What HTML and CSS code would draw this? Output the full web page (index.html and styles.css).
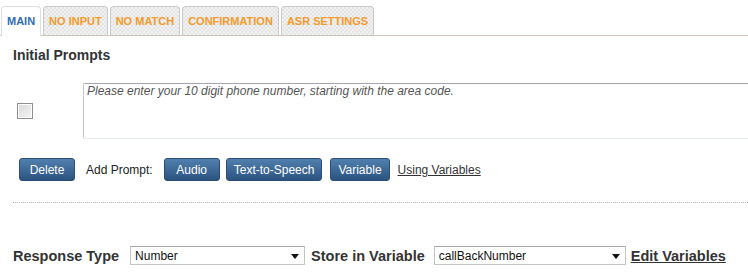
FILE: index.html
```html
<!DOCTYPE html>
<html lang="en">

<head>
    <meta charset="UTF-8">
    <meta name="viewport" content="width=device-width, initial-scale=1.0">
    <title>Prompt Settings</title>
    <link rel="stylesheet" href="styles.css">
</head>

<body>
    <div class="tabs">
        <div class="tab active">MAIN</div>
        <div class="tab">NO INPUT</div>
        <div class="tab">NO MATCH</div>
        <div class="tab">CONFIRMATION</div>
        <div class="tab">ASR SETTINGS</div>
    </div>

    <div class="content">
        <h2>Initial Prompts</h2>

        <div class="prompt-row">
            <div class="check-cell">
                <input type="checkbox" name="prompt1" id="prompt1">
            </div>
            <textarea class="prompt-text" name="prompt1-text" id="prompt1-text" placeholder="Please enter your 10 digit phone number, starting with the area code."></textarea>
        </div>

        <div class="actions">
            <button type="button" class="btn btn-delete">Delete</button>
            <span class="add-label">Add Prompt:</span>
            <button type="button" class="btn btn-audio">Audio</button>
            <button type="button" class="btn btn-tts">Text-to-Speech</button>
            <button type="button" class="btn btn-variable">Variable</button>
            <a href="#" class="link">Using Variables</a>
        </div>

        <hr class="dotted">

        <div class="response-row">
            <label for="response-type">Response Type</label>
            <div class="select-wrap select-type">
                <select name="response-type" id="response-type">
                    <option>Number</option>
                </select>
            </div>
            <label for="store-var" class="store-label">Store in Variable</label>
            <div class="select-wrap select-var">
                <select name="store-var" id="store-var">
                    <option>callBackNumber</option>
                </select>
            </div>
            <a href="#" class="link edit-link">Edit Variables</a>
        </div>
    </div>
</body>

</html>
```

FILE: styles.css
```css
body {
    font-family: "Liberation Sans", Arial, sans-serif;
    margin: 0;
    padding: 0;
    background-color: #fff;
    color: #333;
    overflow: hidden;
}

.tabs {
    display: flex;
    gap: 2px;
    padding-top: 5px;
    padding-left: 1px;
    border-bottom: 1px solid #cdc6b5;
}

.tab {
    height: 28px;
    line-height: 29px;
    padding: 0 5px;
    font-size: 11px;
    font-weight: bold;
    color: #f39b2c;
    border: 1px solid #c9c9c9;
    border-bottom: none;
    border-radius: 4px 4px 0 0;
    background-color: #ececec;
    background-image: repeating-conic-gradient(#e4e4e4 0 25%, #f1f1f1 0 50%);
    background-size: 4px 4px;
    margin-top: 1px;
}

.tab.active {
    color: #2f6db5;
    background: #fff;
    border-color: #dedede;
    margin-bottom: -1px;
    height: 29px;
}

.content {
    padding-left: 13px;
}

h2 {
    font-size: 14px;
    line-height: 16px;
    margin: 11px 0 20px 0;
    color: #333;
}

.prompt-row {
    display: flex;
    align-items: center;
}

.check-cell {
    width: 70px;
    flex-shrink: 0;
}

.check-cell input[type="checkbox"] {
    appearance: none;
    -webkit-appearance: none;
    width: 16px;
    height: 16px;
    margin: 0 0 0 4px;
    display: block;
    border: 1px solid #8f8f8f;
    box-shadow: inset 0 0 0 1px #fff;
    background: linear-gradient(135deg, #d8d8d8, #f6f6f6);
}

.prompt-text {
    flex: 1;
    height: 56px;
    margin-right: -20px;
    padding: 0 3px;
    box-sizing: border-box;
    border: 1px solid #d4d8dc;
    border-top-color: #a6a6ae;
    border-left-color: #c6c6cc;
    border-bottom-color: #e2e8ec;
    border-radius: 2px;
    font-family: "Liberation Sans", Arial, sans-serif;
    font-size: 12px;
    resize: none;
}

.prompt-text::placeholder {
    color: #555;
    font-style: italic;
    opacity: 1;
}

.actions {
    display: flex;
    align-items: center;
    margin-top: 19px;
    padding-left: 6px;
    font-size: 12px;
}

.btn {
    min-width: 56px;
    height: 23px;
    padding: 0 8px;
    font-family: "Liberation Sans", Arial, sans-serif;
    font-size: 12px;
    color: #fff;
    border: 1px solid #2a4e78;
    border-radius: 3px;
    background: linear-gradient(#5180ae, #2b5380);
    cursor: pointer;
}

.add-label {
    margin: 0 11px;
    color: #222;
}

.btn-tts {
    margin-left: 6px;
    padding: 0 7px;
}

.btn-variable {
    margin-left: 8px;
    padding: 0 7px;
}

.link {
    color: #333;
    text-decoration: underline;
    margin-left: 8px;
}

.dotted {
    border: none;
    border-top: 1px dotted #b0b0b0;
    margin: 21px 0 0 0;
    height: 0;
}

.response-row {
    display: flex;
    align-items: center;
    margin-top: 43px;
    font-size: 14.5px;
    font-weight: bold;
}

.select-wrap {
    position: relative;
    height: 19px;
}

.select-wrap::after {
    content: "";
    position: absolute;
    right: 6px;
    top: 8px;
    border-left: 4px solid transparent;
    border-right: 4px solid transparent;
    border-top: 5px solid #111;
    pointer-events: none;
}

.select-wrap select {
    appearance: none;
    -webkit-appearance: none;
    width: 100%;
    height: 19px;
    padding: 0 4px;
    box-sizing: border-box;
    border: 1px solid #c4c4c4;
    border-top-color: #a8a8a8;
    border-radius: 0;
    background: #fff;
    font-family: "Liberation Sans", Arial, sans-serif;
    font-size: 12px;
    color: #111;
}

.select-type {
    width: 175px;
    margin: 0 6px 0 11px;
}

.select-var {
    width: 192px;
    margin: 0 5px 0 9px;
}

.edit-link {
    margin-left: 0;
}
```
